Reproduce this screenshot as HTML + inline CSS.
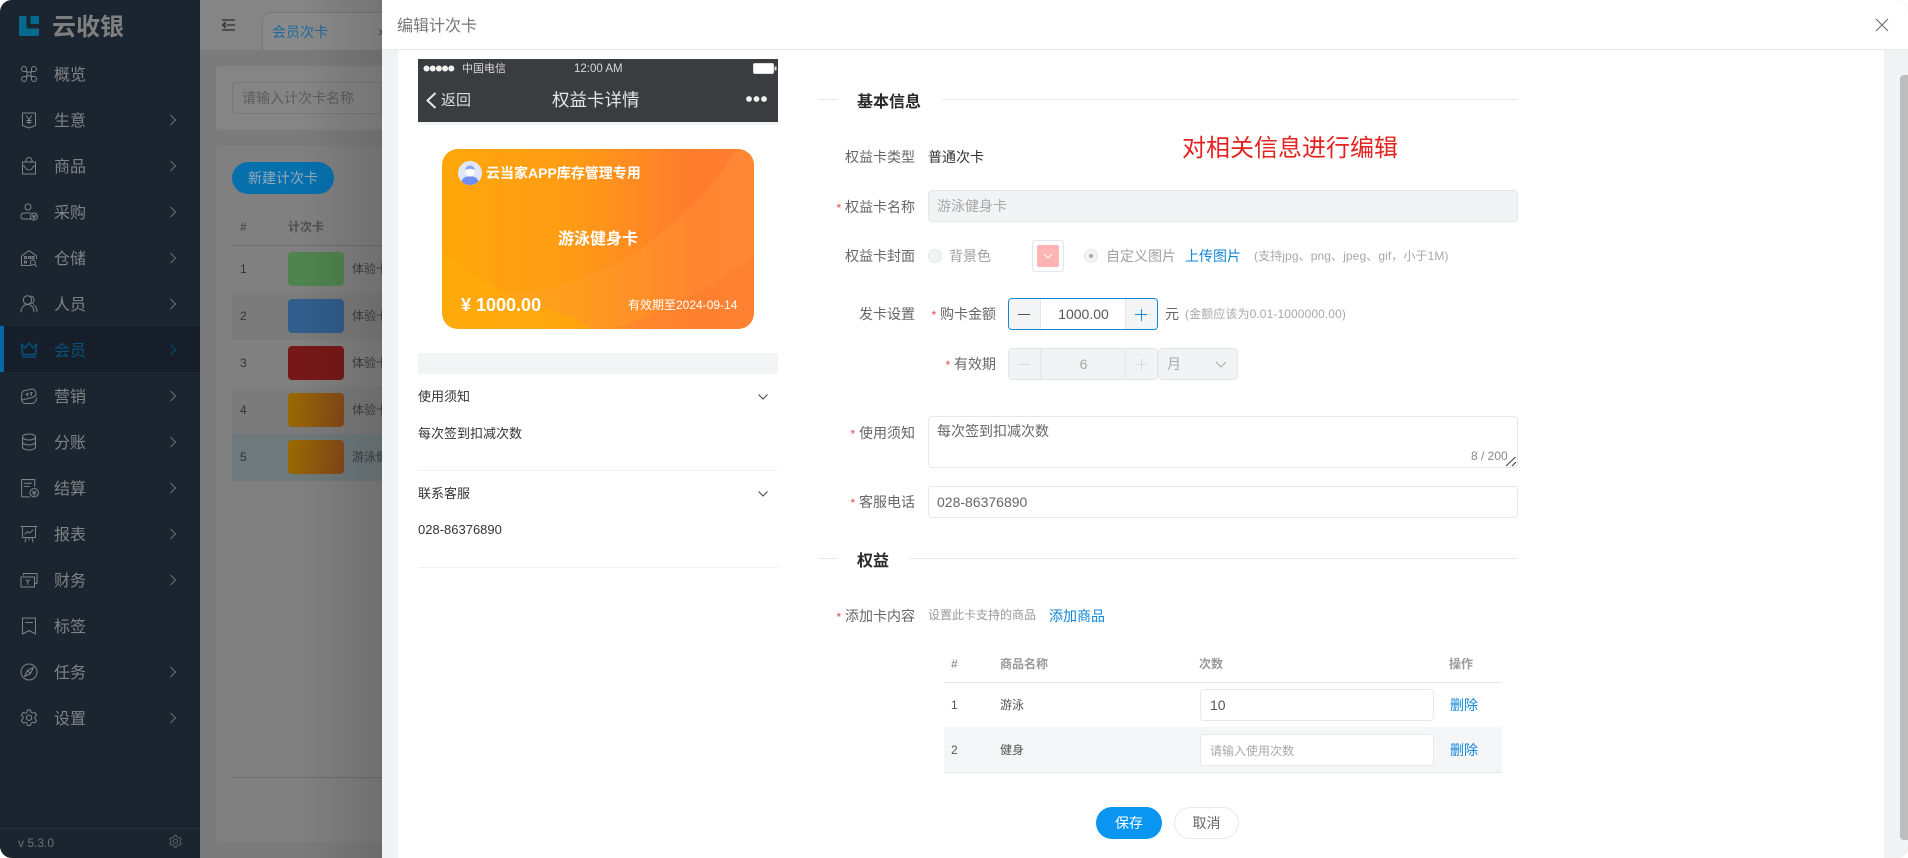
<!DOCTYPE html>
<html lang="zh-CN">
<head>
<meta charset="utf-8">
<title>编辑计次卡</title>
<style>
html,body{margin:0;padding:0;background:#fff;width:1908px;height:858px;overflow:hidden}
*{box-sizing:border-box}
body{font-family:"Liberation Sans","Noto Sans CJK SC",sans-serif;font-size:14px;color:#333}
#app{position:absolute;left:0;top:0;width:1908px;height:858px;border-radius:12px;overflow:hidden;background:#7b7b7b}
.a{position:absolute;white-space:nowrap}
.t{position:absolute;white-space:nowrap;line-height:20px;height:20px}
.side{position:absolute;left:0;top:0;width:200px;height:858px;background:#1a2530}
.mi{position:absolute;left:54px;margin-top:2px;font-size:16px;line-height:24px;height:24px;color:#808386}
.ic{position:absolute;left:19px;margin-top:1px;width:20px;height:20px;fill:none;stroke:#7f8387;stroke-width:1;stroke-linejoin:round;stroke-linecap:round}
.ch{position:absolute;left:168px;margin-top:1px;width:10px;height:14px;fill:none;stroke:#72767a;stroke-width:.9}
.lb{color:#666;text-align:right}
.star{color:#e0484c;font-size:12px}
.inp{position:absolute;background:#fff;border:1px solid #e6e8eb;border-radius:4px}
.dis{background:#f2f3f5;border-color:#e4e6e9}
.blue{color:#0f86d8}
.hint{color:#a8a8a8;font-size:12px;letter-spacing:.1px}
.sec{position:absolute;font-size:16px;font-weight:bold;color:#2a2a2a;line-height:24px;height:24px;white-space:nowrap}
.ln{position:absolute;height:1px;background:#e8e9eb}
</style>
</head>
<body>
<div id="app">

<!-- left dimmed main -->
<div class="a" style="left:200px;top:0;width:182px;height:50px;background:#858585"></div>
<svg class="a" style="left:221px;top:18px;width:16px;height:14px" viewBox="0 0 16 14" fill="none" stroke="#2e2e2e" stroke-width="1.2"><path d="M1 2h13M6 7h8M1 12h13M4 4.600 1.500 7 4 9.400z"/></svg>
<div class="a" style="left:262px;top:12px;width:130px;height:38px;background:#8a8a8a;border:1px solid #777;border-bottom:0;border-radius:8px 0 0 0"></div>
<div class="t" style="left:272px;top:22px;color:#1c6a9c">会员次卡</div>
<div class="t" style="left:378px;top:22px;color:#444">×</div>
<div class="a" style="left:216px;top:66px;width:166px;height:64px;background:#858585;border-radius:4px 0 0 4px"></div>
<div class="a" style="left:232px;top:82px;width:150px;height:32px;border:1px solid #777;border-radius:4px 0 0 4px"></div>
<div class="t" style="left:242px;top:88px;color:#5c5c5c">请输入计次卡名称</div>
<div class="a" style="left:216px;top:146px;width:166px;height:696px;background:#808080;border-radius:4px 0 0 4px"></div>
<div class="a" style="left:232px;top:162px;width:102px;height:32px;background:#0670ad;border-radius:16px;color:#93a9b8;line-height:32px;text-align:center">新建计次卡</div>
<div class="t" style="left:240px;top:217px;font-size:12px;font-weight:bold;color:#4f4f4f">#</div>
<div class="t" style="left:288px;top:217px;font-size:12px;font-weight:bold;color:#4f4f4f">计次卡</div>
<div class="ln" style="left:232px;top:245px;width:150px;background:#6e6e6e"></div>
<div class="a" style="left:232px;top:293px;width:150px;height:47px;background:#7b7b7b"></div>
<div class="a" style="left:232px;top:387px;width:150px;height:47px;background:#7b7b7b"></div>
<div class="a" style="left:232px;top:434px;width:150px;height:47px;background:#6e797c"></div>
<div class="t" style="left:240px;top:259px;font-size:12px;color:#333">1</div>
<div class="t" style="left:240px;top:306px;font-size:12px;color:#333">2</div>
<div class="t" style="left:240px;top:353px;font-size:12px;color:#333">3</div>
<div class="t" style="left:240px;top:400px;font-size:12px;color:#333">4</div>
<div class="t" style="left:240px;top:447px;font-size:12px;color:#333">5</div>
<div class="a" style="left:288px;top:252px;width:56px;height:34px;border-radius:4px;background:#4f834f"></div>
<div class="a" style="left:288px;top:299px;width:56px;height:34px;border-radius:4px;background:#305d8c"></div>
<div class="a" style="left:288px;top:346px;width:56px;height:34px;border-radius:4px;background:#771818"></div>
<div class="a" style="left:288px;top:393px;width:56px;height:34px;border-radius:4px;background:linear-gradient(100deg,#9a6a00,#84481a)"></div>
<div class="a" style="left:288px;top:440px;width:56px;height:34px;border-radius:4px;background:linear-gradient(100deg,#9a6a00,#84481a)"></div>
<div class="t" style="left:352px;top:259px;font-size:12px;color:#3d3d3d">体验卡</div>
<div class="t" style="left:352px;top:306px;font-size:12px;color:#3d3d3d">体验卡</div>
<div class="t" style="left:352px;top:353px;font-size:12px;color:#3d3d3d">体验卡</div>
<div class="t" style="left:352px;top:400px;font-size:12px;color:#3d3d3d">体验卡</div>
<div class="t" style="left:352px;top:447px;font-size:12px;color:#3d3d3d">游泳健身卡</div>
<div class="ln" style="left:232px;top:777px;width:150px;background:#6e6e6e"></div>
<div class="a" style="left:300px;top:0;width:82px;height:858px;background:linear-gradient(90deg,rgba(0,0,0,0),rgba(0,0,0,.13))"></div>

<!-- sidebar -->
<div class="side">
  <svg class="a" style="left:18px;top:15px;width:22px;height:22px" viewBox="0 0 22 22"><path fill="#066a8e" d="M1 1.500Q1 1 1.500 1H8.500V13.500H21V19.500Q21 21 19.500 21H2.500Q1 21 1 19.500z"/><path fill="#066a8e" d="M12.500 1H21V9H12.500z"/></svg>
  <div class="a" style="left:52px;top:13px;font-size:24px;line-height:30px;font-weight:bold;color:#7f7f7f">云收银</div>

  <div class="a" style="left:0;top:326px;width:200px;height:46px;background:#161f29"></div>
  <div class="a" style="left:0;top:326px;width:4px;height:46px;background:#0668a8"></div>

  <svg class="ic" style="top:63px" viewBox="0 0 20 20"><path d="M7.500 7.500H5A2.500 2.500 0 1 1 7.500 5V7.500M12.500 7.500V5A2.500 2.500 0 1 1 15 7.500H12.500M12.500 12.500H15A2.500 2.500 0 1 1 12.500 15V12.500M7.500 12.500V15A2.500 2.500 0 1 1 5 12.500H7.500M7.500 7.500Q10 8.800 12.500 7.500 11.200 10 12.500 12.500 10 11.200 7.500 12.500 8.800 10 7.500 7.500"/></svg>
  <div class="mi" style="top:62px">概览</div>

  <svg class="ic" style="top:109px" viewBox="0 0 20 20"><path d="M3.500 3H16.500V15.500L10 18 3.500 15.500zM7.500 6 10 9.500 12.500 6M10 9.500V14M7.800 10.500H12.200M7.800 12.500H12.200"/></svg>
  <div class="mi" style="top:108px">生意</div>
  <svg class="ch" style="top:112px" viewBox="0 0 10 14"><path d="M2.500 2l5 5-5 5"/></svg>

  <svg class="ic" style="top:155px" viewBox="0 0 20 20"><path d="M3.500 6H16.500V18H3.500zM7 6V4.500A3 3 0 0 1 13 4.500V6M3.500 10H5.500Q7 14 10 14T14.500 10H16.500"/></svg>
  <div class="mi" style="top:154px">商品</div>
  <svg class="ch" style="top:158px" viewBox="0 0 10 14"><path d="M2.500 2l5 5-5 5"/></svg>

  <svg class="ic" style="top:201px" viewBox="0 0 20 20"><circle cx="9" cy="5" r="3"/><path d="M11.500 11H5Q2 11 2 14.500 2 17 4 17H11.500"/><circle cx="15" cy="14.500" r="3.500"/><path d="M13.500 13 15 14.500 16.500 13M15 14.500V17M13.500 15H16.500"/></svg>
  <div class="mi" style="top:200px">采购</div>
  <svg class="ch" style="top:204px" viewBox="0 0 10 14"><path d="M2.500 2l5 5-5 5"/></svg>

  <svg class="ic" style="top:247px" viewBox="0 0 20 20"><path d="M12 17.500H2.500V8L10 2.500 17.500 8V10.500M5.500 8.500H7.500V10.500H5.500zM9.500 8.500H11.500V10.500H9.500zM13 8.500H15V10.500H13zM5.500 13H7.500V15H5.500z"/><circle cx="13.800" cy="14.500" r="2.500"/><path d="M15.600 16.300 17.500 18.500"/></svg>
  <div class="mi" style="top:246px">仓储</div>
  <svg class="ch" style="top:250px" viewBox="0 0 10 14"><path d="M2.500 2l5 5-5 5"/></svg>

  <svg class="ic" style="top:293px" viewBox="0 0 20 20"><circle cx="8.500" cy="6" r="4.200"/><path d="M2 18C2 13.500 5 10.500 8.500 10.500S15 13.500 15 18M11.500 2Q15 2.500 15 6T12.500 9.500M14.500 11Q18 13 18 17.500"/></svg>
  <div class="mi" style="top:292px">人员</div>
  <svg class="ch" style="top:296px" viewBox="0 0 10 14"><path d="M2.500 2l5 5-5 5"/></svg>

  <svg class="ic" style="top:339px;stroke:#07527f;stroke-width:1.400" viewBox="0 0 20 20"><path d="M2.500 4 6 8 10 3 14 8 17.500 4 16.500 14.500H3.500zM3.500 17H16.500"/></svg>
  <div class="mi" style="top:338px;color:#07527f">会员</div>
  <svg class="ch" style="top:342px;stroke:#07527f" viewBox="0 0 10 14"><path d="M2.500 2l5 5-5 5"/></svg>

  <svg class="ic" style="top:385px" viewBox="0 0 20 20"><path d="M3 7Q2 11 3 14L13 11.500Q18 10 17 6.500T13 3L6 4.500Q3.500 5 3 7zM2.500 13.500Q3 17 6 17.500H13Q17 17 17.500 12M7 8.500 9 7.500 8.500 10M11 7 13 6.500 12 9.500"/></svg>
  <div class="mi" style="top:384px">营销</div>
  <svg class="ch" style="top:388px" viewBox="0 0 10 14"><path d="M2.500 2l5 5-5 5"/></svg>

  <svg class="ic" style="top:431px" viewBox="0 0 20 20"><ellipse cx="10" cy="5" rx="6.500" ry="3"/><path d="M3.500 5V15C3.500 16.700 6.500 18 10 18S16.500 16.700 16.500 15V5M3.500 10C3.500 11.700 6.500 13 10 13S16.500 11.700 16.500 10"/></svg>
  <div class="mi" style="top:430px">分账</div>
  <svg class="ch" style="top:434px" viewBox="0 0 10 14"><path d="M2.500 2l5 5-5 5"/></svg>

  <svg class="ic" style="top:477px;left:19px;width:21px;height:21px" viewBox="0 0 20 20"><path d="M10 18H2.500V1.500H15V8M5 5H12M5 8H10"/><circle cx="14.500" cy="14" r="4"/><path d="M13 12.500 14.500 14 16 12.500M14.500 14V16.500M13 14.500H16"/></svg>
  <div class="mi" style="top:476px">结算</div>
  <svg class="ch" style="top:480px" viewBox="0 0 10 14"><path d="M2.500 2l5 5-5 5"/></svg>

  <svg class="ic" style="top:523px" viewBox="0 0 20 20"><path d="M2 2.500H18M3.500 2.500V13.500H16.500V2.500M6 10 8.500 7.500 10.500 9 14 6M7 13.500 6 18M13 13.500 14 18M10 13.500V16"/></svg>
  <div class="mi" style="top:522px">报表</div>
  <svg class="ch" style="top:526px" viewBox="0 0 10 14"><path d="M2.500 2l5 5-5 5"/></svg>

  <svg class="ic" style="top:569px" viewBox="0 0 20 20"><path d="M2 7H15.500V17H2zM4.500 5V3.500H18V13.500H15.500M7 9.800 8.700 11.500 10.500 9.800M8.700 11.500V14.500"/></svg>
  <div class="mi" style="top:568px">财务</div>
  <svg class="ch" style="top:572px" viewBox="0 0 10 14"><path d="M2.500 2l5 5-5 5"/></svg>

  <svg class="ic" style="top:615px" viewBox="0 0 20 20"><path d="M3.500 2H16.500V18L10 14.500 3.500 18zM6.500 6.500H13.500"/></svg>
  <div class="mi" style="top:614px">标签</div>

  <svg class="ic" style="top:661px" viewBox="0 0 20 20"><circle cx="10" cy="10" r="8"/><path d="M14.500 5.500 11.500 11.500 8.500 8.500zM8.500 8.500 5.500 14.500 11.500 11.500z"/></svg>
  <div class="mi" style="top:660px">任务</div>
  <svg class="ch" style="top:664px" viewBox="0 0 10 14"><path d="M2.500 2l5 5-5 5"/></svg>

  <svg class="ic" style="top:707px" viewBox="0 0 20 20"><path d="M8.500 2h3l.6 2.300 1.700.9 2.300-.7 1.500 2.600-1.700 1.700v1.900l1.700 1.700-1.500 2.600-2.300-.7-1.700.9-.6 2.300h-3l-.6-2.300-1.700-.9-2.300.7-1.500-2.600 1.700-1.700v-1.900l-1.700-1.700 1.500-2.600 2.300.7 1.700-.9z"/><circle cx="10" cy="9.750" r="2.700"/></svg>
  <div class="mi" style="top:706px">设置</div>
  <svg class="ch" style="top:710px" viewBox="0 0 10 14"><path d="M2.500 2l5 5-5 5"/></svg>

  <div class="ln" style="left:0;top:828px;width:200px;background:#26313c"></div>
  <div class="t" style="left:18px;top:833px;font-size:12px;color:#6f7376">v 5.3.0</div>
  <svg class="ic" style="left:168px;top:834px;margin-top:0;width:15px;height:15px;stroke:#5f6468;stroke-width:1.200" viewBox="0 0 20 20"><path d="M8.500 2h3l.6 2.300 1.700.9 2.300-.7 1.500 2.600-1.700 1.700v1.900l1.700 1.700-1.500 2.600-2.300-.7-1.700.9-.6 2.300h-3l-.6-2.300-1.700-.9-2.300.7-1.500-2.600 1.700-1.700v-1.900l-1.700-1.700 1.500-2.600 2.300.7 1.700-.9z"/><circle cx="10" cy="9.750" r="2.700"/></svg>
</div>

<!-- drawer -->
<div class="a" style="left:382px;top:0;width:1526px;height:858px;background:#f2f3f5"></div>
<div class="a" style="left:382px;top:0;width:1526px;height:49px;background:#fff"></div>
<div class="ln" style="left:382px;top:49px;width:1526px;background:#e6e7e9"></div>
<div class="a" style="left:398px;top:50px;width:1486px;height:808px;background:#fff"></div>
<div class="a" style="left:1900px;top:75px;width:8px;height:765px;background:#bdbdbd;border-radius:4px 0 0 4px"></div>
<div class="t" style="left:397px;top:15px;font-size:16px;line-height:22px;height:22px;color:#777;margin-top:1px">编辑计次卡</div>
<svg class="a" style="left:1875px;top:18px;width:14px;height:14px" viewBox="0 0 14 14" stroke="#666" stroke-width="1" fill="none"><path d="M1 1l12 12M13 1L1 13"/></svg>

<!-- phone preview -->
<div class="a" style="left:418px;top:59px;width:360px;height:63px;background:#3b3c40"></div>
<div class="a" style="left:418px;top:122px;width:360px;height:3px;background:#f3f4f6"></div>
<svg class="a" style="left:423px;top:65px;width:32px;height:7px" viewBox="0 0 32 7" fill="#f2f2f2"><circle cx="3.500" cy="3.500" r="3"/><circle cx="9.700" cy="3.500" r="3"/><circle cx="15.900" cy="3.500" r="3"/><circle cx="22.100" cy="3.500" r="3"/><circle cx="28.300" cy="3.500" r="3"/></svg>
<div class="a" style="left:462px;top:61px;font-size:11px;line-height:16px;color:#d8d8d8">中国电信</div>
<div class="a" style="left:574px;top:61px;font-size:11.500px;line-height:16px;color:#d8d8d8">12:00 AM</div>
<svg class="a" style="left:753px;top:63px;width:24px;height:11px" viewBox="0 0 24 11"><rect x=".5" y=".5" width="20" height="10" rx="1.500" fill="#fff" stroke="#ddd"/><rect x="21.500" y="3.500" width="2" height="4" fill="#ddd"/></svg>
<svg class="a" style="left:425px;top:92px;width:13px;height:17px" viewBox="0 0 13 17" fill="none" stroke="#e8e8e8" stroke-width="2"><path d="M10.500 1 2.500 8.500l8 7.500"/></svg>
<div class="a" style="left:441px;top:91px;font-size:15px;line-height:20px;color:#dedede">返回</div>
<div class="a" style="left:552px;top:88px;font-size:17.500px;line-height:24px;color:#e6e6e6">权益卡详情</div>
<svg class="a" style="left:745px;top:95px;width:23px;height:8px" viewBox="0 0 23 8" fill="#f2f2f2"><circle cx="4" cy="4" r="2.900"/><circle cx="11.500" cy="4" r="2.900"/><circle cx="19" cy="4" r="2.900"/></svg>

<!-- card -->
<div class="a" style="left:442px;top:149px;width:312px;height:180px;border-radius:16px;overflow:hidden;background:linear-gradient(90deg,#ffa70a 0%,#ff9c14 40%,#ff7c2d 80%,#ff7e32 100%)">
  <svg class="a" style="left:0;top:0;width:312px;height:180px" viewBox="0 0 312 180"><path d="M0 105Q45 145 80 143 170 135 240 65 275 35 295 0H312V180H0z" fill="#ffa83a" fill-opacity=".22"/><path d="M0 105Q60 150 130 168L150 180H0z" fill="#ffb000" fill-opacity=".45"/><path d="M170 180Q260 150 312 105V180z" fill="#ff7a30" fill-opacity=".4"/></svg>
</div>
<svg class="a" style="left:458px;top:161px;width:24px;height:24px" viewBox="0 0 24 24"><circle cx="12" cy="12" r="12" fill="#dfe7fb"/><path d="M3.500 20.500Q5 16 9 15.500H15Q19 16 20.500 20.500 17 24 12 24T3.500 20.500z" fill="#6e8ff0"/><path d="M7.500 9Q7.500 4.500 12 4.500T16.500 9V11Q15.500 15.500 12 15.500T7.500 11z" fill="#fff"/><path d="M7.500 9Q7.500 4.500 12 4.500T16.500 9Q12 6.500 7.500 9z" fill="#8ba4ee"/></svg>
<div class="a" style="left:486px;top:163px;font-size:14px;line-height:20px;font-weight:bold;color:#fff">云当家APP库存管理专用</div>
<div class="a" style="left:442px;top:229px;width:312px;text-align:center;font-size:16px;line-height:22px;font-weight:bold;color:#fff">游泳健身卡</div>
<div class="a" style="left:461px;top:293px;font-size:18px;line-height:24px;font-weight:bold;color:#fff">¥ 1000.00</div>
<div class="a" style="left:628px;top:296px;font-size:12px;line-height:18px;color:#fff">有效期至2024-09-14</div>

<!-- notes -->
<div class="a" style="left:418px;top:353px;width:360px;height:21px;background:#f3f4f6"></div>
<div class="a" style="left:418px;top:387px;font-size:13px;line-height:20px;color:#333">使用须知</div>
<svg class="a" style="left:758px;top:393px;width:10px;height:8px" viewBox="0 0 10 8" fill="none" stroke="#444"><path d="M.5 1.500 5 6l4.500-4.500"/></svg>
<div class="a" style="left:418px;top:424px;font-size:13px;line-height:20px;color:#333">每次签到扣减次数</div>
<div class="ln" style="left:418px;top:470px;width:360px;background:#eff0f2"></div>
<div class="a" style="left:418px;top:484px;font-size:13px;line-height:20px;color:#333">联系客服</div>
<svg class="a" style="left:758px;top:490px;width:10px;height:8px" viewBox="0 0 10 8" fill="none" stroke="#444"><path d="M.5 1.500 5 6l4.500-4.500"/></svg>
<div class="a" style="left:418px;top:520px;font-size:13px;line-height:20px;color:#333">028-86376890</div>
<div class="ln" style="left:418px;top:567px;width:360px;background:#eff0f2"></div>

<!-- form -->
<div class="ln" style="left:818px;top:99px;width:20px"></div>
<div class="sec" style="left:857px;top:91px">基本信息</div>
<div class="ln" style="left:942px;top:99px;width:576px"></div>

<div class="a" style="left:1182px;top:133px;font-size:24px;line-height:32px;color:#e42320">对相关信息进行编辑</div>

<div class="t lb" style="left:815px;top:147px;width:100px">权益卡类型</div>
<div class="t" style="left:928px;top:147px;color:#333">普通次卡</div>

<div class="t lb" style="left:815px;top:197px;width:100px"><span class="star">*</span> 权益卡名称</div>
<div class="inp dis" style="left:928px;top:190px;width:590px;height:32px"></div>
<div class="t" style="left:937px;top:196px;color:#a8a8a8">游泳健身卡</div>

<div class="t lb" style="left:815px;top:246px;width:100px">权益卡封面</div>
<div class="a" style="left:928px;top:249px;width:14px;height:14px;border-radius:50%;background:#f2f3f5;border:1px solid #e4e6e9"></div>
<div class="t" style="left:949px;top:246px;color:#a0a0a0">背景色</div>
<div class="a" style="left:1032px;top:240px;width:32px;height:32px;border:1px solid #e4e6e9;border-radius:4px;background:#fff"></div>
<div class="a" style="left:1037px;top:245px;width:22px;height:22px;background:#ffb3b3;border-radius:2px"></div>
<svg class="a" style="left:1043px;top:253px;width:10px;height:7px" viewBox="0 0 10 7" fill="none" stroke="#fff"><path d="M1 1l4 4 4-4"/></svg>
<div class="a" style="left:1084px;top:249px;width:14px;height:14px;border-radius:50%;background:#f2f3f5;border:1px solid #e4e6e9"></div>
<div class="a" style="left:1089px;top:254px;width:4px;height:4px;border-radius:50%;background:#a8a8a8"></div>
<div class="t" style="left:1106px;top:246px;color:#a0a0a0">自定义图片</div>
<div class="t blue" style="left:1185px;top:246px">上传图片</div>
<div class="t hint" style="left:1254px;top:246px">(支持jpg、png、jpeg、gif，小于1M)</div>

<div class="t lb" style="left:815px;top:304px;width:100px">发卡设置</div>
<div class="t lb" style="left:896px;top:304px;width:100px"><span class="star">*</span> 购卡金额</div>
<div class="a" style="left:1008px;top:298px;width:150px;height:32px;border:1px solid #0f86d8;border-radius:4px;overflow:hidden;background:#fff">
  <div class="a" style="left:0;top:0;width:32px;height:30px;background:#f3f4f6;border-right:1px solid #e4e6e9"></div>
  <div class="a" style="right:0;top:0;width:32px;height:30px;background:#f3f4f6;border-left:1px solid #e4e6e9"></div>
  <div class="a" style="left:9px;top:15px;width:12px;height:1px;background:#555"></div>
  <div class="a" style="right:10px;top:15px;width:12px;height:1px;background:#0f86d8"></div>
  <div class="a" style="right:15.500px;top:10px;width:1px;height:12px;background:#0f86d8"></div>
  <div class="a" style="left:32px;top:0;width:85px;line-height:30px;text-align:center;color:#555">1000.00</div>
</div>
<div class="t" style="left:1165px;top:304px;color:#666">元</div>
<div class="t hint" style="left:1185px;top:304px">(金额应该为0.01-1000000.00)</div>

<div class="t lb" style="left:896px;top:354px;width:100px"><span class="star">*</span> 有效期</div>
<div class="a" style="left:1008px;top:348px;width:150px;height:32px;border:1px solid #e4e6e9;border-radius:4px;overflow:hidden;background:#f2f3f5">
  <div class="a" style="left:0;top:0;width:32px;height:30px;border-right:1px solid #e4e6e9"></div>
  <div class="a" style="right:0;top:0;width:32px;height:30px;border-left:1px solid #e4e6e9"></div>
  <div class="a" style="left:10px;top:15px;width:11px;height:1px;background:#d6d8db"></div>
  <div class="a" style="right:10px;top:15px;width:11px;height:1px;background:#d6d8db"></div>
  <div class="a" style="right:15px;top:10px;width:1px;height:11px;background:#d6d8db"></div>
  <div class="a" style="left:32px;top:0;width:85px;line-height:30px;text-align:center;color:#a8a8a8">6</div>
</div>
<div class="a" style="left:1158px;top:348px;width:80px;height:32px;background:#f2f3f5;border:1px solid #e4e6e9;border-radius:4px"></div>
<div class="t" style="left:1167px;top:354px;color:#a8a8a8">月</div>
<svg class="a" style="left:1215px;top:361px;width:12px;height:8px" viewBox="0 0 12 8" fill="none" stroke="#aaa"><path d="M1 1l5 5 5-5"/></svg>

<div class="t lb" style="left:815px;top:423px;width:100px"><span class="star">*</span> 使用须知</div>
<div class="inp" style="left:928px;top:416px;width:590px;height:52px"></div>
<div class="t" style="left:937px;top:421px;color:#666">每次签到扣减次数</div>
<div class="t" style="left:1471px;top:446px;font-size:12px;color:#888">8 / 200</div>
<svg class="a" style="left:1505px;top:456px;width:12px;height:11px" viewBox="0 0 12 11" fill="none" stroke="#444" stroke-width="1.100"><path d="M1 10 10.500 1M7 10 11 6"/></svg>

<div class="t lb" style="left:815px;top:492px;width:100px"><span class="star">*</span> 客服电话</div>
<div class="inp" style="left:928px;top:486px;width:590px;height:32px"></div>
<div class="t" style="left:937px;top:492px;color:#666">028-86376890</div>

<div class="ln" style="left:818px;top:558px;width:20px"></div>
<div class="sec" style="left:857px;top:550px">权益</div>
<div class="ln" style="left:910px;top:558px;width:608px"></div>

<div class="t lb" style="left:815px;top:606px;width:100px"><span class="star">*</span> 添加卡内容</div>
<div class="t" style="left:928px;top:605px;font-size:12px;color:#999">设置此卡支持的商品</div>
<div class="t blue" style="left:1049px;top:606px">添加商品</div>

<div class="t" style="left:951px;top:654px;font-size:12px;font-weight:bold;color:#999">#</div>
<div class="t" style="left:1000px;top:654px;font-size:12px;font-weight:bold;color:#999">商品名称</div>
<div class="t" style="left:1199px;top:654px;font-size:12px;font-weight:bold;color:#999">次数</div>
<div class="t" style="left:1449px;top:654px;font-size:12px;font-weight:bold;color:#999">操作</div>
<div class="ln" style="left:944px;top:682px;width:558px;background:#e6e7e9"></div>
<div class="a" style="left:944px;top:727px;width:558px;height:45px;background:#f5f6f8"></div>
<div class="ln" style="left:944px;top:772px;width:558px;background:#e6e7e9"></div>
<div class="t" style="left:951px;top:695px;font-size:12px;color:#555">1</div>
<div class="t" style="left:1000px;top:695px;font-size:12px;color:#555">游泳</div>
<div class="inp" style="left:1200px;top:689px;width:234px;height:32px"></div>
<div class="t" style="left:1210px;top:695px;color:#555">10</div>
<div class="t blue" style="left:1450px;top:695px">删除</div>
<div class="t" style="left:951px;top:740px;font-size:12px;color:#555">2</div>
<div class="t" style="left:1000px;top:740px;font-size:12px;color:#555">健身</div>
<div class="inp" style="left:1200px;top:734px;width:234px;height:32px"></div>
<div class="t" style="left:1210px;top:741px;font-size:12px;color:#aaa">请输入使用次数</div>
<div class="t blue" style="left:1450px;top:740px">删除</div>

<div class="a" style="left:1096px;top:807px;width:66px;height:32px;border-radius:16px;background:#0a95f0;color:#fff;line-height:32px;text-align:center">保存</div>
<div class="a" style="left:1174px;top:807px;width:65px;height:32px;border-radius:16px;background:#fff;border:1px solid #e8e9eb;color:#666;line-height:30px;text-align:center">取消</div>

</div>
</body>
</html>
